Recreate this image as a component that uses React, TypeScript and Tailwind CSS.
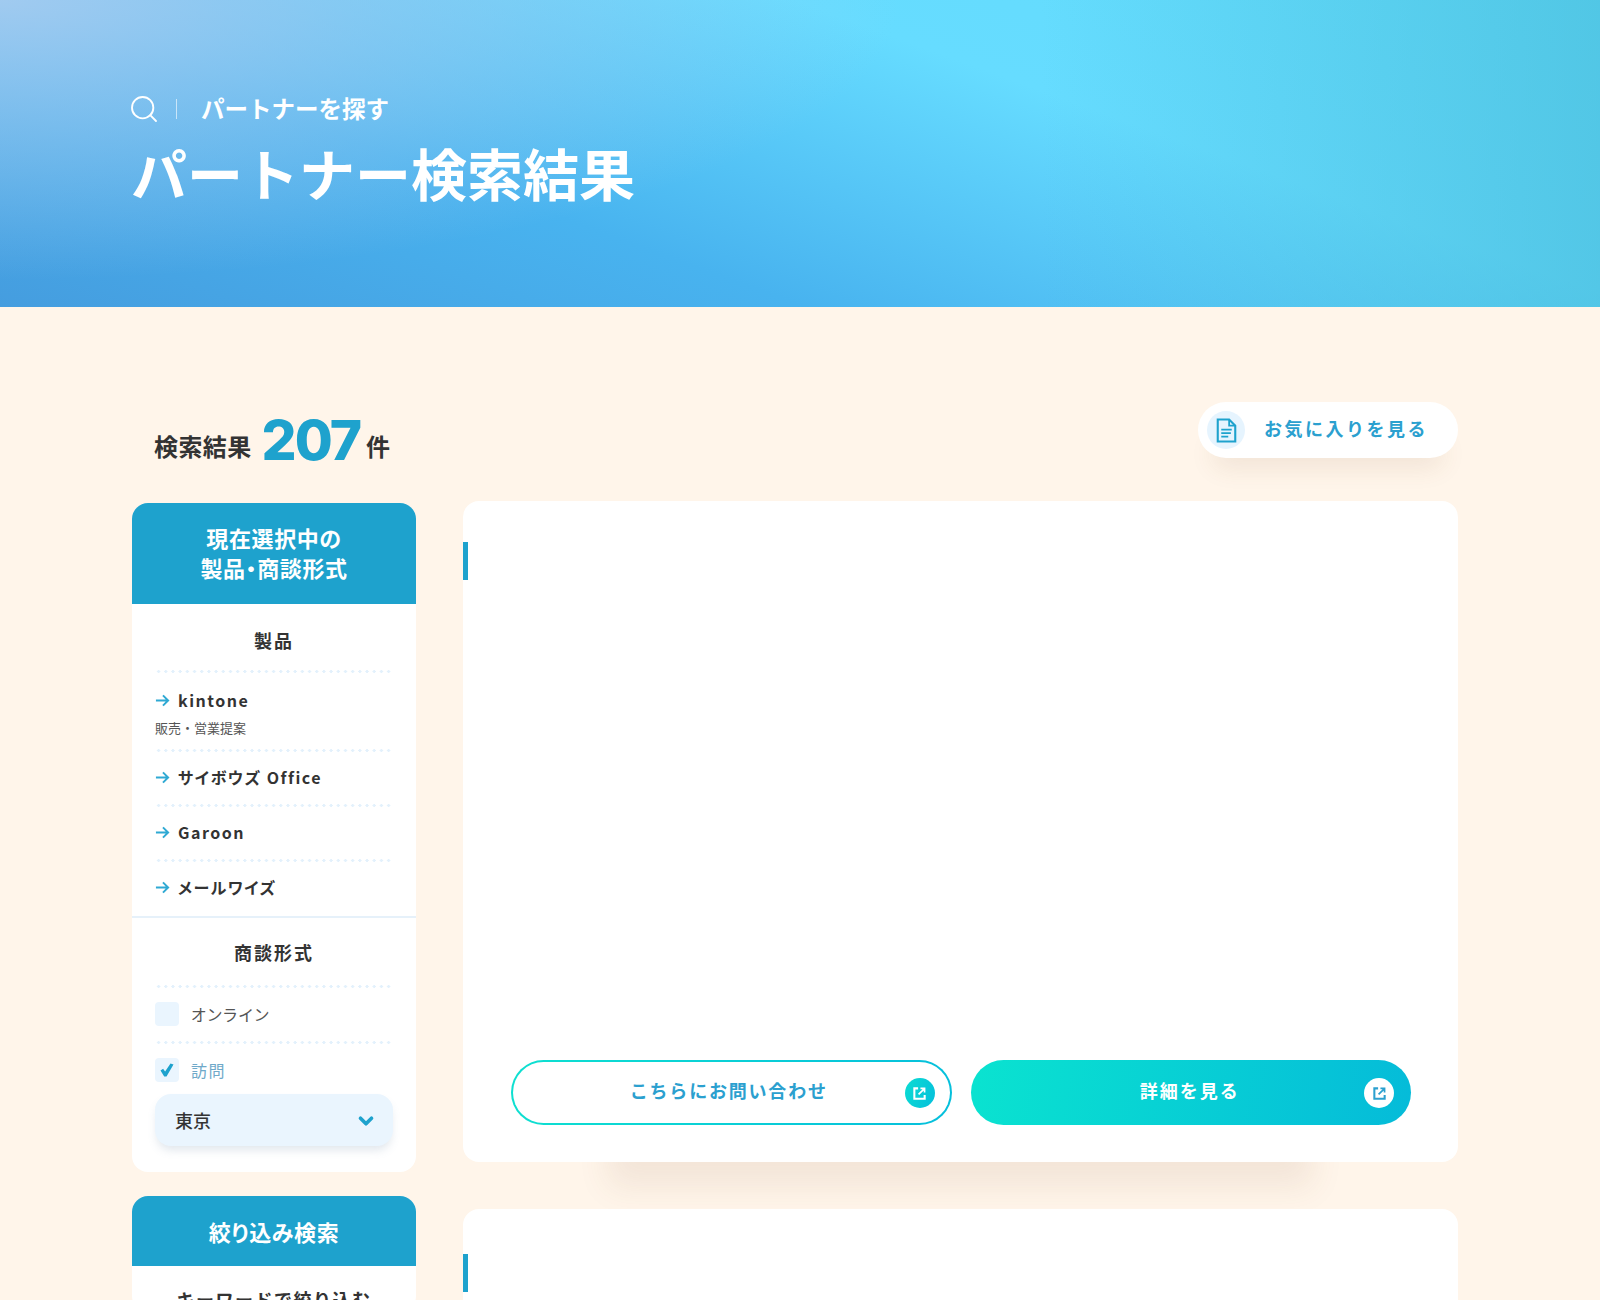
import { ChevronDown, Search } from "lucide-react";

const FONT = "font-['Noto_Sans_CJK_JP','Noto_Sans',sans-serif]";
const PALT = "[font-feature-settings:'palt']";

function Dots() {
  return <div className="h-[3px] bg-[radial-gradient(circle,#e3f1fc_1.5px,transparent_1.6px)] bg-[length:7.2px_3px]" />;
}

function ExternalIcon({ className }: { className: string }) {
  return (
    <svg viewBox="0 0 16 16" className={className} fill="none" stroke="currentColor" strokeWidth="2.2">
      <path d="M6.5 2.5H2.5v11h11V9.5" />
      <path d="M7 9l6-6M9 2.6h4.4V7" strokeWidth="1.8" />
    </svg>
  );
}

function DocIcon() {
  return (
    <svg viewBox="0 0 24 28" className="w-[21px] h-[25px] text-[#1ea2cd]" fill="none" stroke="currentColor">
      <path d="M2 1.500h13l7 7v18H2z" strokeWidth="2.400" />
      <path d="M15 1.500v7h7" strokeWidth="2" />
      <path d="M6 13h12M6 17h11M6 21h8" strokeWidth="2" />
    </svg>
  );
}

function ArrowIcon() {
  return (
    <svg viewBox="0 0 16 16" className="w-[15px] h-[15px] text-[#2fa9d3] shrink-0" fill="none" stroke="currentColor" strokeWidth="2.1">
      <path d="M1 8h13M8.500 2.500 14 8l-5.500 5.500" />
    </svg>
  );
}

function ProductRow({ label, sub, dotted = true }: { label: string; sub?: string; dotted?: boolean }) {
  return (
    <div>
      <div className={sub ? "pt-[13px] pb-[12px]" : "pt-[11px] pb-[13px]"}>
        <div className="flex items-center gap-[8px] h-[28px]">
          <ArrowIcon />
          <span className={`text-[16px] font-bold text-[#333] tracking-[1.500px] ${PALT}`}>{label}</span>
        </div>
        {sub && <div className="text-[13px] text-[#555] leading-[18px] mt-[5px]">{sub}</div>}
      </div>
      {dotted && <Dots />}
    </div>
  );
}

function Check({ label, checked }: { label: string; checked?: boolean }) {
  return (
    <div className="flex items-center h-[53px] pb-[1px]">
      <span className="w-[24px] h-[24px] rounded-[4px] bg-[#eaf5fe] flex items-center justify-center">
        {checked && (
          <svg viewBox="0 0 16 16" className="w-[16px] h-[16px] text-[#1ea2cd]" fill="currentColor">
            <path d="M1.500 8.500l2.600-1.700 2 2.700L11.500 1.500l3 1-7 12h-2.300z" />
          </svg>
        )}
      </span>
      <span className={`ml-[12px] -mt-[1px] text-[16px] tracking-[1.600px] ${PALT} ${checked ? "text-[#6fa9c9]" : "text-[#555]"}`}>{label}</span>
    </div>
  );
}

function ResultCard({ top, children }: { top: string; children?: React.ReactNode }) {
  return (
    <div className={`relative bg-white rounded-[16px] shadow-[0_170px_30px_-145px_rgba(120,80,40,0.09)] ${top}`}>
      <div className="w-[5px] h-[38px] bg-[#1ea2cd]" />
      {children}
    </div>
  );
}

export default function App() {
  return (
    <div className={`${FONT} w-[1600px] h-[1300px] overflow-hidden bg-[#fff5ea]`}>
      <header className="h-[307px] px-[132px] pt-[92px] text-white bg-[radial-gradient(ellipse_900px_280px_at_0_0,rgba(170,205,240,0.9),transparent),linear-gradient(to_right,transparent_65%,rgba(70,185,215,0.6)_100%),linear-gradient(20deg,#459ddf_0%,#48b3ef_33%,#66dcff_67%,#62dcfb_100%)]">
        <div className="flex items-center h-[34px]">
          <Search className="w-[32px] h-[32px] -ml-[4px] shrink-0" strokeWidth={1.4} />
          <span className="w-px h-[20px] bg-white/60 ml-[16px] mr-[24px]" />
          <span className="text-[23.500px] font-bold leading-none">パートナーを探す</span>
        </div>
        <h1 className="text-[56px] font-bold leading-[72px] mt-[10px] -ml-[1px]">パートナー検索結果</h1>
      </header>

      <main className="pl-[132px] pr-[142px]">
        <div className="flex justify-between pt-[95px] h-[194px]">
          <div className="flex items-start pl-[22px] text-[#333] font-bold">
            <span className="text-[24px] leading-[24px] tracking-[0.400px] mt-[32px]">検索結果</span>
            <span className="font-['Inter',sans-serif] font-extrabold text-[55px] leading-[56px] text-[#1ea2cd] tracking-[-2px] ml-[10px] mr-[6px] mt-[10px]">207</span>
            <span className="text-[24px] leading-[24px] mt-[32px]">件</span>
          </div>
          <div className="w-[260px] h-[56px] rounded-full bg-white flex items-center pl-[9px] shadow-[0_24px_24px_-14px_rgba(120,80,40,0.1)]">
            <span className="w-[38px] h-[38px] rounded-full bg-[#e6f4fe] flex items-center justify-center">
              <DocIcon />
            </span>
            <span className="ml-[19px] text-[18px] font-bold tracking-[2.500px] text-[#2ba0cf] -mt-[3px]">お気に入りを見る</span>
          </div>
        </div>

        <div className="flex gap-[47px] items-start">
          <aside className="w-[284px] shrink-0 mt-[2px]">
            <div className="bg-white rounded-[16px] overflow-hidden">
              <div className={`h-[101px] bg-[#1ea2cd] text-white text-center font-bold text-[22px] leading-[30px] tracking-[0.600px] pt-[19px] ${PALT}`}>
                現在選択中の
                <br />
                製品・商談形式
              </div>
              <div className="px-[23px]">
                <div className="text-center font-bold text-[18px] text-[#333] tracking-[2px] leading-[26px] pt-[23px] pb-[17px]">製品</div>
                <Dots />
                <ProductRow label="kintone" sub="販売・営業提案" />
                <ProductRow label="サイボウズ Office" />
                <ProductRow label="Garoon" />
                <div className="pb-[2px]">
                  <ProductRow label="メールワイズ" dotted={false} />
                </div>
              </div>
              <div className="h-[2px] bg-[#e6f1fa]" />
              <div className="px-[23px] pb-[26px]">
                <div className="text-center font-bold text-[18px] text-[#333] tracking-[2px] leading-[26px] pt-[21px] pb-[20px]">商談形式</div>
                <Dots />
                <Check label="オンライン" />
                <Dots />
                <Check label="訪問" checked />
                <div className="h-[52px] rounded-[16px] bg-[#eaf5fe] shadow-[0_6px_10px_-2px_rgba(100,130,160,0.2)] flex items-center justify-between pl-[20px] pr-[16px] -mt-[3px]">
                  <span className="text-[18px] font-medium text-[#333]">東京</span>
                  <ChevronDown className="w-[22px] h-[22px] text-[#1ea2cd] mt-[2px]" strokeWidth={4} />
                </div>
              </div>
            </div>

            <div className="bg-white rounded-[16px] overflow-hidden mt-[24px]">
              <div className={`h-[70px] bg-[#1ea2cd] text-white text-center font-bold text-[22px] leading-[70px] tracking-[0.600px] ${PALT}`}>絞り込み検索</div>
              <div className="text-center font-bold text-[18px] text-[#333] tracking-[1.500px] leading-[26px] pt-[20px]">キーワードで絞り込む</div>
            </div>
          </aside>

          <div className="flex-1 flex flex-col gap-[47px]">
            <ResultCard top="pt-[41px]">
              <div className="grid grid-cols-2 gap-[19px] pl-[48px] pr-[47px] pt-[480px] pb-[37px]">
                <div className="relative h-[65px] rounded-full border-2 border-transparent [background:linear-gradient(#fff,#fff)_padding-box,linear-gradient(100deg,#0ee0d0,#05bfdc)_border-box] flex items-center justify-center">
                  <span className="text-[18px] font-bold tracking-[1.800px] text-[#2ba0cf] -mt-[5px] -ml-[5px]">こちらにお問い合わせ</span>
                  <span className="absolute right-[15px] top-[16px] w-[30px] h-[30px] rounded-full bg-[linear-gradient(110deg,#0bdcd2,#05bfdc)] flex items-center justify-center text-white">
                    <ExternalIcon className="w-[15px] h-[15px]" />
                  </span>
                </div>
                <div className="relative h-[65px] rounded-full bg-[linear-gradient(100deg,#0ae3d0,#05bbd9)] flex items-center justify-center">
                  <span className="text-[18px] font-bold tracking-[2px] text-white -mt-[5px] -ml-[2px]">詳細を見る</span>
                  <span className="absolute right-[17px] top-[18px] w-[30px] h-[30px] rounded-full bg-white flex items-center justify-center text-[#2ba0cf]">
                    <ExternalIcon className="w-[15px] h-[15px]" />
                  </span>
                </div>
              </div>
            </ResultCard>
            <ResultCard top="pt-[45px]">
              <div className="h-[200px]" />
            </ResultCard>
          </div>
        </div>
      </main>
    </div>
  );
}
